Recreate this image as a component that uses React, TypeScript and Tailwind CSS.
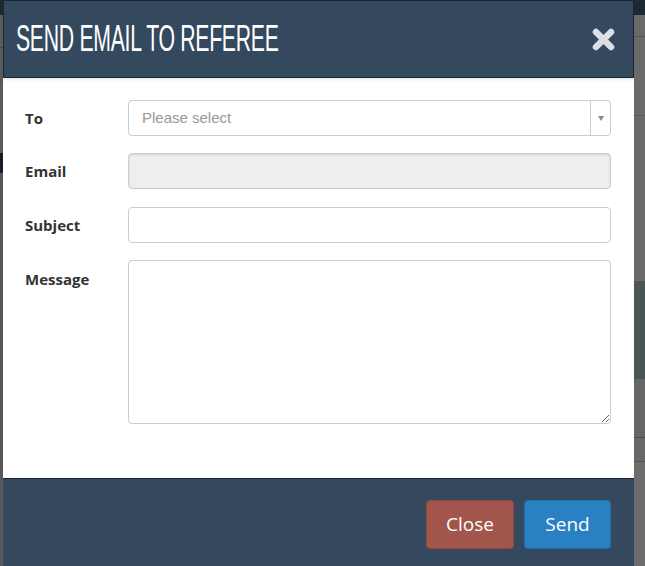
import React from "react";

function Field({ label, children, top = false, className = "" }: { label: string; children: React.ReactNode; top?: boolean; className?: string }) {
  return (
    <div className={`flex ${top ? "items-start" : "items-center"} ${className}`}>
      <label className={`w-[103px] shrink-0 text-[15px] font-bold text-[#333] ${top ? "pt-[8px]" : ""}`}>
        {label}
      </label>
      <div className="flex-1">{children}</div>
    </div>
  );
}

export default function App() {
  return (
    <div
      className="flex h-[566px] w-[645px] overflow-hidden bg-[#5c5c5c]"
      style={{ fontFamily: '"Open Sans", "Liberation Sans", sans-serif' }}
    >
      {/* left strip of the page behind the backdrop */}
      <div className="flex w-[3px] shrink-0 flex-col">
        <div className="h-[15px] bg-[#1d2833]" />
        <div className="h-[32px] bg-[#5a5a5a]" />
        <div className="h-px bg-[#444]" />
        <div className="h-[105px] bg-[#5a5a5a]" />
        <div className="h-[20px] bg-[#1a1a2a]" />
        <div className="flex-1 bg-[#585858]" />
      </div>

      {/* modal */}
      <div className="flex w-[631px] shrink-0 flex-col bg-white">
        <div className="flex h-[78px] items-center justify-between border border-[#1b2632] bg-[#34495e] pl-[12px] pr-[18px]">
          <h1
            className="origin-left scale-x-[0.59] whitespace-nowrap text-[36px] leading-none tracking-[-0.5px] text-white"
            style={{ fontFamily: '"Liberation Sans", Arial, sans-serif' }}
          >
            SEND EMAIL TO REFEREE
          </h1>
          <button type="button" className="mt-px">
            <svg width="23" height="23" viewBox="0 0 23 23">
              <path d="M4 4 L19 19 M19 4 L4 19" stroke="#dce0e5" strokeWidth="6.5" strokeLinecap="round" />
            </svg>
          </button>
        </div>

        <div className="flex flex-1 flex-col pl-[22px] pr-[23px] pt-[22px] shadow-[inset_0_4px_4px_-3px_rgba(0,0,0,0.12)]">
          <Field label="To">
            <div className="flex h-[36px] items-center rounded-[4px] border border-[#ccc] bg-white">
              <span
                className="flex-1 pl-[13px] text-[15px] text-[#999]"
                style={{ fontFamily: '"Liberation Sans", Arial, sans-serif' }}
              >
                Please select
              </span>
              <div className="flex h-full w-[20px] items-center justify-center border-l border-[#ccc]">
                <div className="h-0 w-0 border-l-[3.5px] border-r-[3.5px] border-t-[5px] border-l-transparent border-r-transparent border-t-[#888]" />
              </div>
            </div>
          </Field>
          <Field label="Email" className="mt-[17px]">
            <div className="h-[36px] rounded-[4px] border border-[#ccc] bg-[#eee] shadow-[inset_0_1px_2px_rgba(0,0,0,0.12)]" />
          </Field>
          <Field label="Subject" className="mt-[18px]">
            <input className="block h-[36px] w-full rounded-[4px] border border-[#ccc] bg-white outline-none" />
          </Field>
          <Field label="Message" top className="mt-[17px]">
            <textarea className="block h-[164px] w-full resize-y rounded-[4px] border border-[#ccc] bg-white outline-none" />
          </Field>
        </div>

        <div className="flex h-[88px] shrink-0 items-start justify-end gap-[10px] border-t border-[#1b2632] bg-[#34495e] pr-[23px] pt-[21px]">
          <button
            type="button"
            className="h-[49px] w-[88px] rounded-[4px] border border-[#8c4a40] bg-[#a2564b] text-[19px] text-white"
          >
            Close
          </button>
          <button
            type="button"
            className="h-[49px] w-[87px] rounded-[4px] border border-[#2470aa] bg-[#2980c2] text-[19px] text-white"
          >
            Send
          </button>
        </div>
      </div>

      {/* right strip */}
      <div className="flex flex-1 flex-col">
        <div className="h-[15px] bg-[#1d2833]" />
        <div className="h-[21px] bg-[#6a6a6a]" />
        <div className="h-px bg-[#555]" />
        <div className="h-[78px] bg-[#6a6a6a]" />
        <div className="h-px bg-[#5a5a5a]" />
        <div className="h-[165px] bg-[#6a6a6a]" />
        <div className="h-[98px] bg-[#4a5555]" />
        <div className="h-[58px] bg-[#666]" />
        <div className="h-px bg-[#4a4a4a]" />
        <div className="h-[23px] bg-[#686868]" />
        <div className="h-px bg-[#555]" />
        <div className="flex-1 bg-[#6c6c6c]" />
      </div>
    </div>
  );
}
